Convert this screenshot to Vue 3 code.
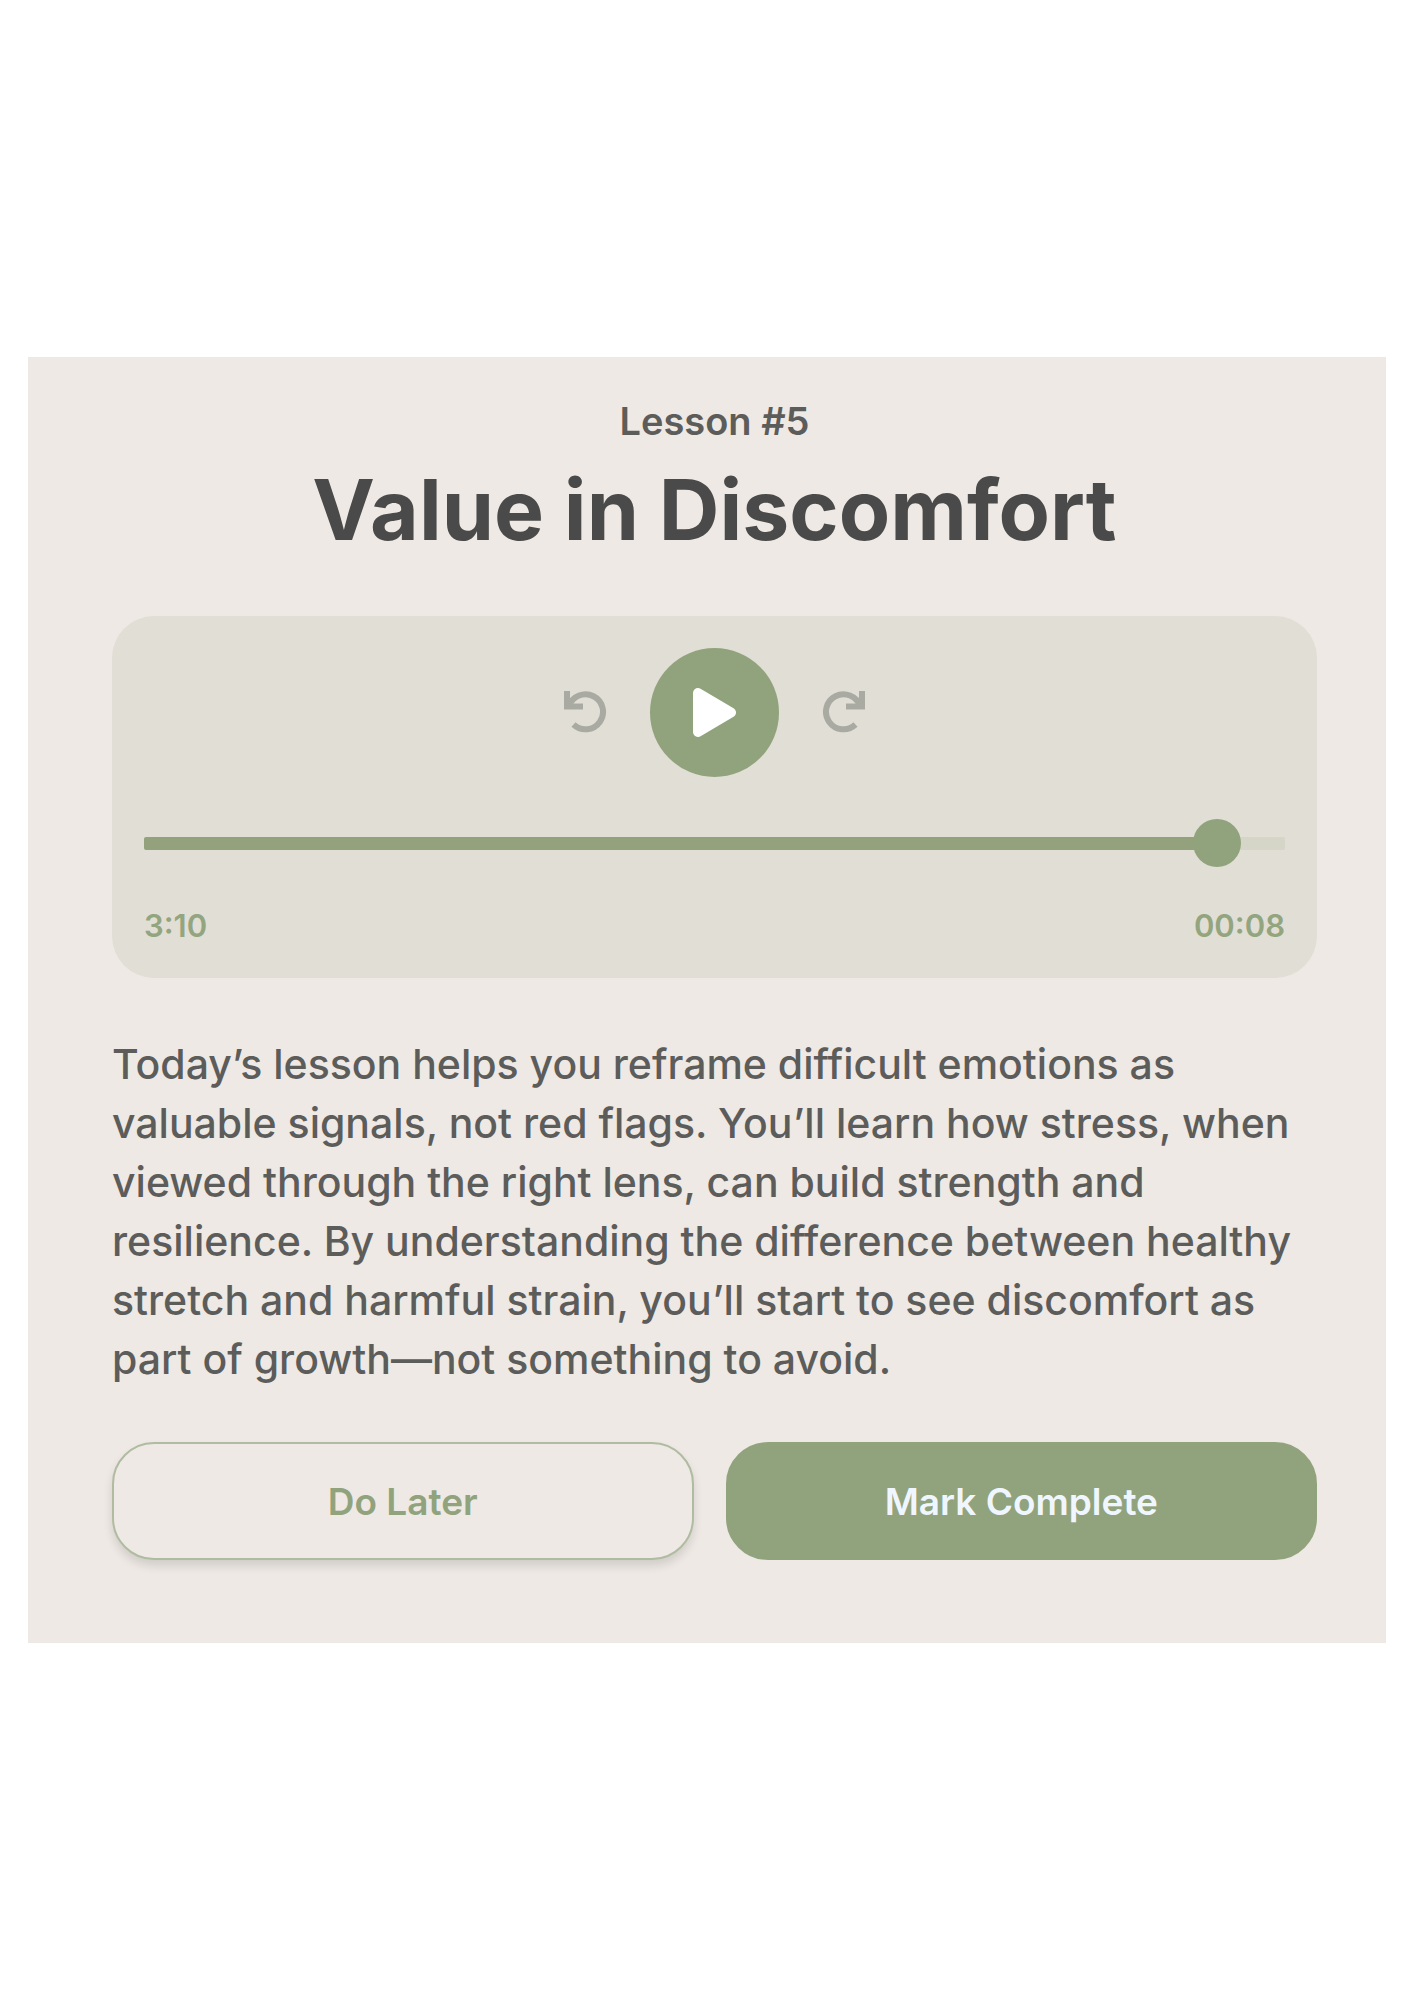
<template>
  <main class="page">
    <section class="lesson-card">
      <header class="lesson-header">
        <p class="lesson-number">Lesson #5</p>
        <h1 class="lesson-title">Value in Discomfort</h1>
      </header>

      <div class="player">
        <div class="controls">
          <button class="skip-button" type="button" aria-label="Rewind" @click="skip(-10)">
            <svg class="skip-icon" viewBox="0 0 43 43" aria-hidden="true">
              <path d="M3 0V15.500H19" />
              <path d="M5 15A17.500 17.500 0 1 1 9.500 33.500" />
            </svg>
          </button>
          <button class="play-button" type="button" :aria-label="playing ? 'Pause' : 'Play'" @click="playing = !playing">
            <svg v-if="!playing" class="play-icon" viewBox="0 0 43 49" aria-hidden="true">
              <path d="M5 5L38 24.500L5 44Z" />
            </svg>
            <svg v-else class="play-icon" viewBox="0 0 43 49" aria-hidden="true">
              <path d="M9 6V43M34 6V43" />
            </svg>
          </button>
          <button class="skip-button" type="button" aria-label="Forward" @click="skip(10)">
            <svg class="skip-icon flipped" viewBox="0 0 43 43" aria-hidden="true">
              <path d="M3 0V15.500H19" />
              <path d="M5 15A17.500 17.500 0 1 1 9.500 33.500" />
            </svg>
          </button>
        </div>

        <input
          v-model.number="elapsed"
          class="progress"
          type="range"
          min="0"
          :max="duration"
          step="0.1"
          aria-label="Playback position"
          :style="{ '--progress': progress }"
        />

        <div class="times">
          <span>{{ total }}</span>
          <span>{{ remaining }}</span>
        </div>
      </div>

      <p class="description">
        Today’s lesson helps you reframe difficult emotions as valuable signals, not red flags. You’ll
        learn how stress, when viewed through the right lens, can build strength and resilience. By
        understanding the difference between healthy stretch and harmful strain, you’ll start to see
        discomfort as part of growth—not something to avoid.
      </p>

      <div class="actions">
        <button class="action later" type="button">Do Later</button>
        <button class="action complete" type="button">Mark Complete</button>
      </div>
    </section>
  </main>
</template>

<script setup>
import { computed, ref } from 'vue';

const duration = 190;
const elapsed = ref(182.4);
const playing = ref(false);

const progress = computed(() => `${(elapsed.value / duration) * 100}%`);

const pad = (n) => String(n).padStart(2, '0');

const total = `${Math.floor(duration / 60)}:${pad(duration % 60)}`;

const remaining = computed(() => {
  const left = Math.round(duration - elapsed.value);
  return `${pad(Math.floor(left / 60))}:${pad(left % 60)}`;
});

const skip = (seconds) => {
  elapsed.value = Math.min(duration, Math.max(0, elapsed.value + seconds));
};
</script>

<style>
body {
  margin: 0;
  background: #fff;
}
</style>

<style scoped>
.page {
  display: flex;
  align-items: center;
  min-height: 100vh;
  padding: 0 28px;
  box-sizing: border-box;
  font-family: Inter, 'Liberation Sans', sans-serif;
  color: #5c5c5b;
}

.lesson-card {
  flex: 1;
  min-width: 0;
  padding: 40px 69px 83px 84px;
  box-sizing: border-box;
  background: #eee9e4;
}

.lesson-header {
  text-align: center;
}

.lesson-number {
  margin: 0;
  font-size: 38px;
  font-weight: 600;
  line-height: 48px;
}

.lesson-title {
  margin: 13px 0 0;
  font-size: 84px;
  font-weight: 700;
  line-height: 104px;
  color: #4a4a4a;
}

.player {
  margin-top: 54px;
  padding: 32px;
  border-radius: 42px;
  background: #e1ded5;
}

.controls {
  display: flex;
  justify-content: center;
  align-items: center;
  gap: 43px;
}

.skip-button,
.play-button {
  display: flex;
  justify-content: center;
  align-items: center;
  padding: 0;
  border: none;
  background: none;
  cursor: pointer;
}

.skip-icon {
  width: 43px;
  height: 43px;
  fill: none;
  stroke: #a9aba2;
  stroke-width: 6;
}

.flipped {
  transform: scaleX(-1);
}

.play-button {
  width: 129px;
  height: 129px;
  border-radius: 50%;
  background: #91a37d;
}

.play-icon {
  width: 43px;
  height: 49px;
  fill: #fff;
  stroke: #fff;
  stroke-width: 10;
  stroke-linejoin: round;
}

.progress {
  display: block;
  width: 100%;
  height: 49px;
  margin: 42px 0 0;
  appearance: none;
  background: none;
  cursor: pointer;
}

.progress::-webkit-slider-runnable-track {
  height: 13px;
  border-radius: 2px;
  background: linear-gradient(#93a27d, #93a27d) 0 0 / var(--progress) 100% no-repeat #d5d6c7;
}

.progress::-webkit-slider-thumb {
  width: 48px;
  height: 48px;
  margin-top: -18px;
  border-radius: 50%;
  background: #91a37d;
  appearance: none;
}

.times {
  display: flex;
  justify-content: space-between;
  margin-top: 38px;
  font-size: 31px;
  font-weight: 600;
  line-height: 40px;
  color: #93a57f;
}

.description {
  margin: 57px 0 0;
  font-size: 41px;
  font-weight: 500;
  line-height: 59px;
}

.actions {
  display: flex;
  gap: 32px;
  margin-top: 53px;
}

.action {
  height: 118px;
  border: 2px solid #91a37d;
  border-radius: 42px;
  font-family: inherit;
  font-size: 37px;
  font-weight: 600;
  cursor: pointer;
}

.later {
  flex: 58 1 0;
  border-color: #b0bca1;
  background: #eee9e4;
  box-shadow: 0 6px 10px rgba(0, 0, 0, 0.12);
  color: #91a37d;
}

.complete {
  flex: 59 1 0;
  background: #91a37d;
  color: #f0f6ff;
}
</style>
